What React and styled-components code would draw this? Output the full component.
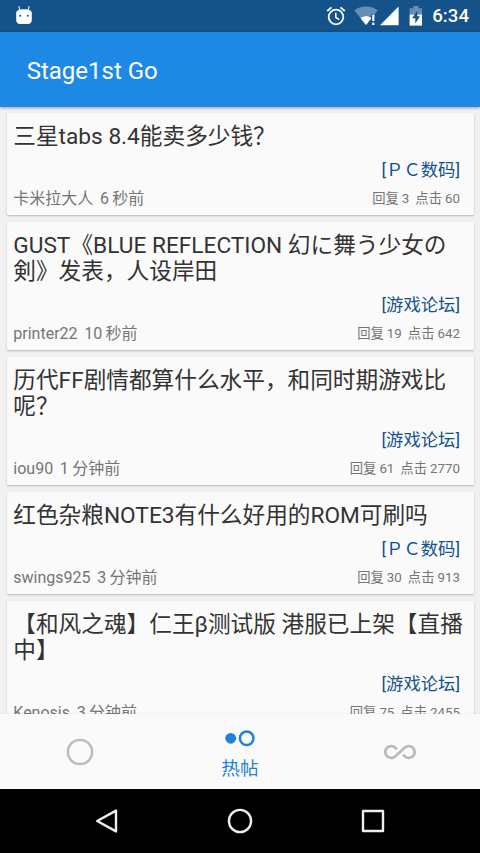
import React from "react";
import styled, { createGlobalStyle } from "styled-components";

const threads = [
  {
    title: ["三星tabs 8.4能卖多少钱？"],
    forum: "ＰＣ数码",
    author: "卡米拉大人",
    time: "6 秒前",
    replies: 3,
    views: 60,
  },
  {
    title: ["GUST《BLUE REFLECTION 幻に舞う少女の", "剣》发表，人设岸田"],
    forum: "游戏论坛",
    author: "printer22",
    time: "10 秒前",
    replies: 19,
    views: 642,
  },
  {
    title: ["历代FF剧情都算什么水平，和同时期游戏比", "呢？"],
    forum: "游戏论坛",
    author: "iou90",
    time: "1 分钟前",
    replies: 61,
    views: 2770,
  },
  {
    title: ["红色杂粮NOTE3有什么好用的ROM可刷吗"],
    forum: "ＰＣ数码",
    author: "swings925",
    time: "3 分钟前",
    replies: 30,
    views: 913,
  },
  {
    title: ["【和风之魂】仁王β测试版 港服已上架【直播", "中】"],
    forum: "游戏论坛",
    author: "Kenosis",
    time: "3 分钟前",
    replies: 75,
    views: 2455,
  },
];

const DebugIcon = () => (
  <svg width="18" height="20" viewBox="0 0 18 20">
    <path d="M4.8 4.5 3.9 0M13.2 4.5 14.1 0" stroke="#d5e6f3" strokeWidth="1.2" />
    <path
      d="M1.2 7.2C1.2 4.4 3.5 3.2 9 3.2s7.8 1.2 7.8 4v6.3c0 3.4-2 4.5-4 4.5H5.2c-2 0-4-1.1-4-4.5z"
      fill="#fff"
    />
    <circle cx="5.2" cy="9.8" r="1" fill="#14528a" />
    <circle cx="12.8" cy="9.8" r="1" fill="#14528a" />
  </svg>
);

const AlarmIcon = () => (
  <svg width="20" height="20" viewBox="0 0 20 20" fill="none" stroke="#fff">
    <circle cx="10" cy="11" r="7.3" strokeWidth="1.8" />
    <path d="M1.2 5 5.5 1.4M18.8 5l-4.3-3.6" strokeWidth="1.8" />
    <path d="M9.8 6.8v4.7l3.5 2.1" strokeWidth="1.5" />
  </svg>
);

const WifiIcon = () => (
  <svg width="24" height="20" viewBox="0 0 24 20">
    <path
      d="M12 19 .2 4.2C3.5 1.7 7.5.4 12 .4s8.500 1.300 11.800 3.800L20.500 8.400H17v4.300z"
      fill="#fff"
      opacity=".35"
    />
    <path d="M12 19 6.6 12.2c3.200-2.400 7.600-2.400 10.400-.2v.7z" fill="#fff" />
    <path d="M18.200 8.700h2.200v6.400h-2.200zM18.200 16.600h2.200v2.300h-2.200z" fill="#fff" />
  </svg>
);

const SignalIcon = () => (
  <svg width="19" height="20" viewBox="0 0 19 20">
    <path d="M0 19.2 18.6.5v18.700z" fill="#fff" />
  </svg>
);

const BatteryIcon = () => (
  <svg width="14" height="20" viewBox="0 0 14 20">
    <path d="M4.300 0h5.200v2.200H13V8.500H.6V2.200h3.700z" fill="#fff" opacity=".35" />
    <path d="M.6 8.500H13V19.600H.6z" fill="#fff" />
    <path d="M8.300 5 3 12.300h3.300v5.200L11 10.200H8.300z" fill="#14528a" />
  </svg>
);

const RingIcon = () => (
  <svg width="32" height="32" viewBox="0 0 24 24">
    <circle cx="12" cy="12" r="9.1" fill="none" stroke="#bababa" strokeWidth="1.8" />
  </svg>
);

const HotIcon = () => (
  <svg width="32" height="20" viewBox="0 0 32 20">
    <circle cx="6.7" cy="10.300" r="5.400" fill="#1e82dc" />
    <circle cx="22.700" cy="10.300" r="6.800" fill="none" stroke="#1e82dc" strokeWidth="2.500" />
  </svg>
);

const InfinityIcon = () => (
  <svg width="32" height="32" viewBox="0 0 24 24">
    <path
      fill="#bababa"
      d="M18.6 6.62c-1.44 0-2.8.56-3.77 1.53L12 10.66 10.48 12h.01L7.8 14.39c-.64.64-1.49.99-2.4.99-1.87 0-3.39-1.51-3.39-3.38S3.53 8.62 5.4 8.62c.91 0 1.76.35 2.44 1.03l1.13 1 1.51-1.34L9.22 8.2C8.2 7.18 6.84 6.62 5.4 6.62 2.42 6.62 0 9.04 0 12s2.42 5.38 5.4 5.38c1.44 0 2.8-.56 3.77-1.53l2.83-2.5.01.01L13.52 12h-.01l2.69-2.39c.64-.64 1.49-.99 2.4-.99 1.87 0 3.39 1.51 3.39 3.38s-1.52 3.38-3.39 3.38c-.9 0-1.76-.35-2.44-1.03l-1.14-1.01-1.51 1.34 1.27 1.12c1.02 1.01 2.37 1.57 3.82 1.57 2.98 0 5.4-2.41 5.4-5.38s-2.42-5.37-5.4-5.37z"
    />
  </svg>
);

const ThreadCard = ({ thread }) => (
  <Card>
    <Title>
      {thread.title.map((line) => (
        <span key={line}>{line}</span>
      ))}
    </Title>
    <Forum>[{thread.forum}]</Forum>
    <Meta>
      <Byline>
        <span>{thread.author}</span>
        <span>{thread.time}</span>
      </Byline>
      <Stats>{`回复 ${thread.replies}  点击 ${thread.views}`}</Stats>
    </Meta>
  </Card>
);

export default function App() {
  return (
    <Screen>
      <GlobalStyle />
      <StatusBar>
        <DebugIcon />
        <StatusIcons>
          <AlarmIcon />
          <WifiIcon />
          <SignalIcon />
          <BatteryIcon />
          <Clock>6:34</Clock>
        </StatusIcons>
      </StatusBar>
      <AppBar>
        <h1>Stage1st Go</h1>
      </AppBar>
      <ThreadList>
        {threads.map((thread) => (
          <ThreadCard key={thread.author} thread={thread} />
        ))}
      </ThreadList>
      <TabBar>
        <Tab>
          <RingIcon />
        </Tab>
        <Tab $active>
          <HotIcon />
          <span>热帖</span>
        </Tab>
        <Tab>
          <InfinityIcon />
        </Tab>
      </TabBar>
      <SystemNav>
        <svg width="26" height="26" viewBox="0 0 26 26">
          <path d="M3.200 13 22 2.600v20.800z" />
        </svg>
        <svg width="26" height="26" viewBox="0 0 26 26">
          <circle cx="13" cy="13" r="11.100" />
        </svg>
        <svg width="26" height="26" viewBox="0 0 26 26">
          <path d="M3 3h20v20H3z" />
        </svg>
      </SystemNav>
    </Screen>
  );
}

const GlobalStyle = createGlobalStyle`
  * {
    box-sizing: border-box;
    margin: 0;
    padding: 0;
  }

  body {
    font-family: Roboto, "Noto Sans CJK SC", sans-serif;
    text-spacing-trim: space-all;
    overflow: hidden;
  }

  svg {
    display: block;
    flex-shrink: 0;
  }
`;

const Screen = styled.div`
  width: 480px;
  height: 853px;
  display: flex;
  flex-direction: column;
  background: #f1f1f1;
`;

const StatusBar = styled.div`
  height: 32px;
  flex-shrink: 0;
  padding: 0 11px 0 15px;
  display: flex;
  align-items: center;
  justify-content: space-between;
  background: #14528a;
`;

const StatusIcons = styled.div`
  display: flex;
  align-items: center;

  svg:nth-of-type(2) {
    margin-left: 8px;
  }

  svg:nth-of-type(3) {
    margin-left: 2px;
  }

  svg:nth-of-type(4) {
    margin-left: 10px;
  }
`;

const Clock = styled.span`
  margin-left: 9px;
  font-size: 18.67px;
  font-weight: 500;
  line-height: 32px;
  color: #fff;
`;

const AppBar = styled.header`
  height: 75px;
  flex-shrink: 0;
  padding: 2px 26.7px 0;
  display: flex;
  align-items: center;
  background: #1e88e5;
  box-shadow: 0 1px 3px rgba(0, 0, 0, 0.35);
  z-index: 1;

  h1 {
    font-size: 24px;
    font-weight: 400;
    color: #fff;
  }
`;

const ThreadList = styled.main`
  flex: 1;
  min-height: 0;
  padding: 6px 6.5px 0 7px;
  display: flex;
  flex-direction: column;
  gap: 7px;
  overflow: hidden;
`;

const Card = styled.article`
  flex-shrink: 0;
  padding: 11px 13.5px 6px 6.3px;
  border-radius: 1px;
  background: #fafafa;
  box-shadow: 0 1px 2px rgba(0, 0, 0, 0.24);
`;

const Title = styled.h2`
  display: flex;
  flex-direction: column;
  font-size: 22.67px;
  font-weight: 400;
  line-height: 26px;
  color: #333;
  white-space: pre;
`;

const Forum = styled.p`
  margin-top: 9px;
  font-size: 17.33px;
  line-height: 22px;
  text-align: right;
  color: #14528a;
`;

const Meta = styled.div`
  height: 20px;
  margin-top: 8px;
  display: flex;
  align-items: center;
  justify-content: space-between;
  font-size: 16px;
  line-height: 20px;
  color: #757575;
  white-space: pre;
`;

const Byline = styled.p`
  display: flex;
  gap: 6.7px;
  word-spacing: -0.6px;
`;

const Stats = styled.p`
  font-size: 13.33px;
  word-spacing: -0.3px;
`;

const TabBar = styled.nav`
  height: 75px;
  flex-shrink: 0;
  display: flex;
  background: #fafafa;
  box-shadow: 0 -1px 1px rgba(0, 0, 0, 0.03);
  z-index: 1;
`;

const Tab = styled.div`
  flex: 1;
  display: flex;
  flex-direction: column;
  align-items: center;
  justify-content: ${({ $active }) => ($active ? "flex-start" : "center")};
  padding-top: ${({ $active }) => ($active ? "14px" : "0")};
  font-size: 18.67px;
  line-height: 24px;
  color: #1e82dc;

  span {
    margin-top: 9px;
  }
`;

const SystemNav = styled.div`
  height: 64px;
  flex-shrink: 0;
  padding: 0 94px;
  display: flex;
  align-items: center;
  justify-content: space-between;
  background: #000;

  svg {
    fill: none;
    stroke: #eee;
    stroke-width: 2.4;
    stroke-linejoin: round;
  }
`;
